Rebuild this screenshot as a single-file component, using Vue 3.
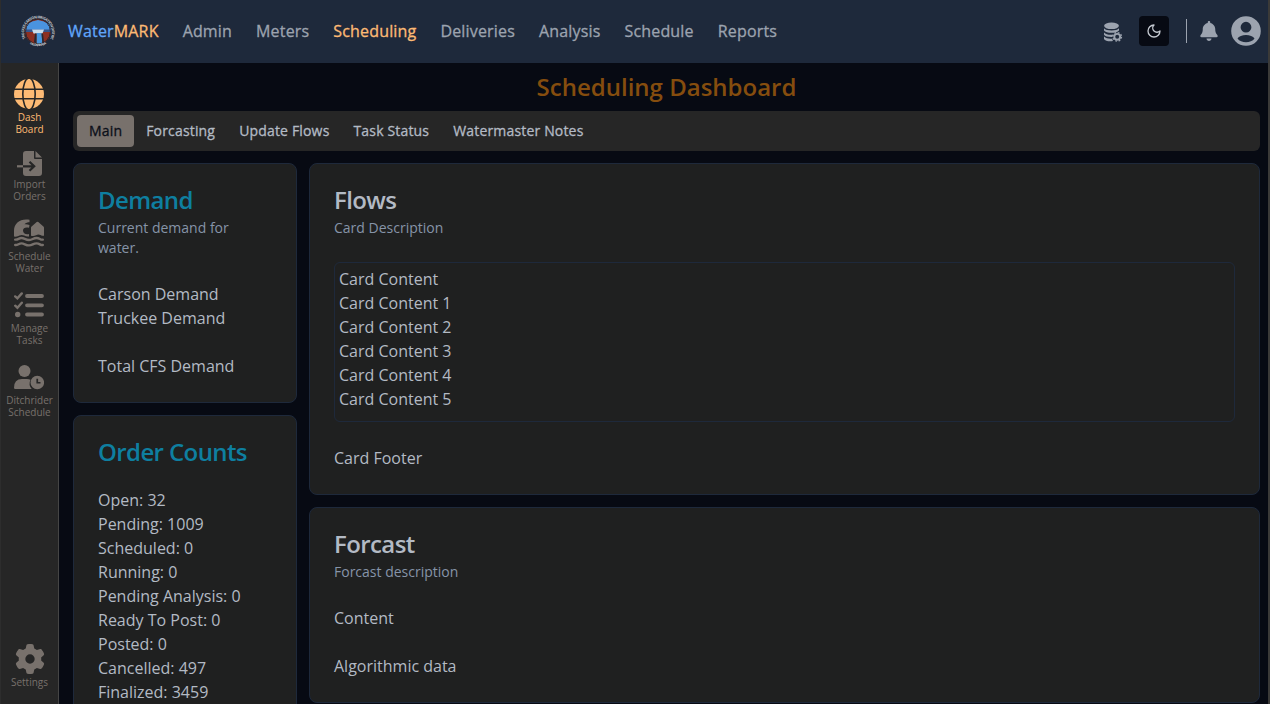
<script setup>
const nav = ['Admin', 'Meters', 'Scheduling', 'Deliveries', 'Analysis', 'Schedule', 'Reports']
const tabs = ['Main', 'Forcasting', 'Update Flows', 'Task Status', 'Watermaster Notes']
const orders = ['Open: 32', 'Pending: 1009', 'Scheduled: 0', 'Running: 0', 'Pending Analysis: 0', 'Ready To Post: 0', 'Posted: 0', 'Cancelled: 497', 'Finalized: 3459']
const rows = ['Card Content', 'Card Content 1', 'Card Content 2', 'Card Content 3', 'Card Content 4', 'Card Content 5']
</script>

<template>
  <div class="frame">
    <header class="top">
      <svg class="logo" width="36" height="36" viewBox="0 0 36 36">
        <defs>
          <path id="arcTop" d="M5.500 25.500 A14 14 0 1 1 30.500 25.500" />
          <path id="arcBottom" d="M9 30.500 A17 17 0 0 0 27 30.500" />
          <clipPath id="disc"><circle cx="18" cy="18.500" r="12.800" /></clipPath>
        </defs>
        <g clip-path="url(#disc)">
          <rect width="36" height="36" fill="#8d2f22" />
          <path d="M5 17 7 11 12 8.500 18 7 24 8.500 29 11 31 17z" fill="#4a93df" />
          <path d="M5 16.500h26v2.500H5z" fill="#35548a" />
          <path d="M12 16.500h12l-1.500 4h-9z" fill="#cbdceb" />
          <path d="M16.500 20h5l1 12h-6z" fill="#4697df" />
          <path d="M15 20.500h1.500v11L14 29zM21.500 20.500H23l1 8-1.500 3z" fill="#2a2830" />
          <circle cx="18" cy="18.500" r="12.500" fill="none" stroke="#26242a" stroke-width="1" />
        </g>
        <text class="seal"><textPath href="#arcTop" textLength="59">TRUCKEE-CARSON IRRIGATION DISTRICT</textPath></text>
        <text class="seal low"><textPath href="#arcBottom" startOffset="1" textLength="17">FALLON, NEVADA</textPath></text>
      </svg>
      <div class="brand">Water<span>MARK</span></div>
      <nav><a v-for="n in nav" :key="n" :class="{ on: n === 'Scheduling' }">{{ n }}</a></nav>
      <div class="tools">
        <svg class="db" width="20" height="20" viewBox="0 0 20 20">
          <ellipse cx="8.500" cy="3.800" rx="7.400" ry="3.300" />
          <path d="M1 6.200C3 9.200 14 9.200 16 6.200v2.300C14 11.600 3 11.600 1 8.500zM1 10.400c2 2.300 6 2.700 9.500 2.100L9.200 14.900C5 15 2 14.200 1 12.700zM1 14.600c2 2 5 2.300 8 2.100l1 2.400c-4 .6-8-.1-9-2.200z" />
          <circle cx="14.200" cy="14.800" r="2.900" fill="none" stroke="#9ca3af" stroke-width="1.900" />
          <circle cx="14.200" cy="14.800" r="4.300" fill="none" stroke="#9ca3af" stroke-width="1.300" stroke-dasharray="1.800 1.577" />
        </svg>
        <div class="mode">
          <svg width="16" height="16" viewBox="0 0 24 24"><path d="M12 3a6 6 0 0 0 9 9 9 9 0 1 1-9-9Z" fill="none" stroke="#c5cad2" stroke-width="2" stroke-linecap="round" stroke-linejoin="round" /></svg>
        </div>
        <i class="sep"></i>
        <svg class="bell" width="18" height="20" viewBox="0 0 448 512"><path d="M224 0c-17.700 0-32 14.300-32 32V51.200C119 66 64 130.600 64 208v18.800c0 47-17.300 92.400-48.500 127.600l-7.400 8.300c-8.400 9.400-10.400 22.900-5.300 34.400S19.400 416 32 416H416c12.600 0 24-7.400 29.200-18.900s3.100-25-5.300-34.400l-7.400-8.300C401.300 319.200 384 273.900 384 226.800V208c0-77.400-55-142-128-156.800V32c0-17.700-14.300-32-32-32zm45.300 493.300c12-12 18.700-28.300 18.700-45.300H160c0 17 6.700 33.300 18.700 45.300s28.300 18.700 45.300 18.700 33.300-6.700 45.300-18.700z" /></svg>
        <svg class="user" width="30" height="30" viewBox="0 0 30 30"><path fill-rule="evenodd" d="M15 .2a14.800 14.800 0 1 0 0 29.600 14.800 14.800 0 0 0 0-29.600zM15 5.800a5.400 5.400 0 1 1 0 10.800 5.400 5.400 0 0 1 0-10.800zM6.500 22.500C9 17.700 21 17.700 23.500 22.500 20 27.500 10 27.500 6.500 22.500z" /></svg>
      </div>
    </header>

    <div class="body">
      <aside>
        <div class="item on i1">
          <svg width="30" height="30" viewBox="0 0 30 30">
            <circle cx="15" cy="15" r="15" />
            <g class="cut"><ellipse cx="15" cy="15" rx="6.200" ry="16" /><path d="M0 10.200h30M0 19.800h30" /></g>
          </svg>
          <span>Dash<br>Board</span>
        </div>
        <div class="item i2">
          <svg width="26" height="26" viewBox="0 0 26 26">
            <path d="M9 0h8v7q0 1 1 1h7v14q0 3-3 3H9q-3 0-3-3V3q0-3 3-3zM18.500 0 25 6.500h-6.500z" />
            <path class="shaft" d="M0 15.300h6" /><path class="arrow" d="M6 15.300h11M12.500 10.800l4.700 4.500-4.700 4.500" />
          </svg>
          <span>Import<br>Orders</span>
        </div>
        <div class="item i3">
          <svg width="30" height="28" viewBox="0 0 30 28">
            <path d="M15.500.8C7-1 0 4 0 11.500v6q3.500.5 5.500-1 2.300-1.200 4.700 0 2 1.200 4.800.9V15C11.500 15.800 9 14 9 11.500 9 9 11.500 8 15 8.800L15.500 6c-2-.8-3.500-1-5-.7 1.500-1.700 3-2.100 5-2.100z" />
            <path d="M17 8.800q0-.8.600-1.300L22.700 3q.8-.6 1.600 0l5.100 4.500q.6.500.6 1.300v8q-1.500.3-3.500-.8-2.200-1-4.500.3-2.500 1.400-5 .4z" />
            <path class="wave" d="M1.200 20.600c2.800.4 3.500-1.600 6.300-1.600s4 2 7.500 2 4-2 7.500-2 3.500 2 6.300 1.600M1.200 26c2.800.4 3.500-1.600 6.300-1.600s4 2 7.500 2 4-2 7.500-2 3.500 2 6.300 1.600" />
          </svg>
          <span>Schedule<br>Water</span>
        </div>
        <div class="item i4">
          <svg width="30" height="26" viewBox="0 0 30 26">
            <path class="check" d="M1.200 4.400 3.400 6.400 7.800 1.400M1.200 13.700 3.400 15.700 7.800 10.700" />
            <circle cx="3.700" cy="22.500" r="2.700" />
            <path class="bar" d="M13 4h15M13 13.300h15M13 22.500h15" />
          </svg>
          <span>Manage<br>Tasks</span>
        </div>
        <div class="item i5">
          <svg width="30" height="25" viewBox="0 0 30 25">
            <circle cx="10.500" cy="6" r="6" />
            <path d="M8 14h5q2 0 3.500.8a8.500 8.500 0 0 0 1.200 9.200H1.200Q0 24 0 22.800 0 14 8 14z" />
            <path fill-rule="evenodd" d="M23.300 10.700a6.800 6.800 0 1 0 0 13.600 6.800 6.800 0 0 0 0-13.600zM22.400 13.700h1.700v3.200h2.400v1.700h-4.100z" />
          </svg>
          <span>Ditchrider<br>Schedule</span>
        </div>
        <div class="item settings">
          <svg width="30" height="30" viewBox="0 0 512 512"><path d="M495.900 166.600c3.200 8.700.5 18.400-6.400 24.600l-43.300 39.400c1.100 8.300 1.700 16.800 1.700 25.400s-.6 17.100-1.700 25.400l43.300 39.400c6.900 6.200 9.600 15.900 6.400 24.600-4.400 11.900-9.700 23.300-15.800 34.300l-4.700 8.100c-6.600 11-14 21.400-22.100 31.200-5.900 7.200-15.700 9.600-24.500 6.800l-55.700-17.700c-13.400 10.300-28.200 18.900-44 25.400l-12.500 57.100c-2 9.100-9 16.300-18.200 17.800-13.800 2.300-28 3.500-42.500 3.500s-28.700-1.200-42.500-3.500c-9.200-1.500-16.200-8.700-18.200-17.800l-12.500-57.100c-15.800-6.500-30.600-15.100-44-25.400L83.100 425.900c-8.800 2.800-18.600.3-24.500-6.800-8.100-9.800-15.500-20.200-22.100-31.200l-4.700-8.100c-6.100-11-11.400-22.400-15.800-34.300-3.200-8.700-.5-18.400 6.400-24.600l43.300-39.400C64.600 273.100 64 264.600 64 256s.6-17.100 1.700-25.400L22.400 191.200c-6.900-6.200-9.600-15.900-6.400-24.600 4.400-11.900 9.700-23.300 15.800-34.300l4.700-8.100c6.600-11 14-21.400 22.100-31.200 5.900-7.200 15.700-9.600 24.500-6.800l55.700 17.700c13.400-10.300 28.200-18.900 44-25.400l12.500-57.100c2-9.100 9-16.300 18.200-17.800C227.300 1.200 241.500 0 256 0s28.700 1.200 42.500 3.500c9.200 1.500 16.200 8.700 18.200 17.800l12.500 57.100c15.800 6.500 30.600 15.100 44 25.400l55.700-17.700c8.800-2.800 18.600-.3 24.500 6.800 8.100 9.800 15.500 20.200 22.100 31.200l4.700 8.100c6.100 11 11.400 22.400 15.800 34.300zM256 336a80 80 0 1 0 0-160 80 80 0 1 0 0 160z" /></svg>
          <span>Settings</span>
        </div>
      </aside>

      <main>
        <h1>Scheduling Dashboard</h1>
        <div class="tabs"><button v-for="t in tabs" :key="t" :class="{ on: t === 'Main' }">{{ t }}</button></div>
        <div class="grid">
          <div class="col">
            <section class="card teal">
              <h3>Demand</h3>
              <p class="desc">Current demand for water.</p>
              <div class="content">Carson Demand<br>Truckee Demand<br><br>Total CFS Demand</div>
            </section>
            <section class="card teal">
              <h3>Order Counts</h3>
              <div class="content"><div v-for="o in orders" :key="o">{{ o }}</div></div>
            </section>
          </div>
          <div class="col">
            <section class="card">
              <h3>Flows</h3>
              <p class="desc">Card Description</p>
              <div class="scroll"><div v-for="r in rows" :key="r">{{ r }}</div></div>
              <div class="content">Card Footer</div>
            </section>
            <section class="card">
              <h3>Forcast</h3>
              <p class="desc">Forcast description</p>
              <div class="content">Content</div>
              <div class="content">Algorithmic data</div>
            </section>
          </div>
        </div>
      </main>
    </div>
  </div>
</template>

<style>
body { background: #070a13; overflow: hidden; }
</style>

<style scoped>
* { box-sizing: border-box; }
.frame { width: 1270px; height: 704px; overflow: hidden; display: flex; flex-direction: column; border-left: 1px solid #2d2d2d; border-right: 2px solid #3b3a38; background: #070a13; color: #b3bac4; font: 16px/24px "Open Sans", sans-serif; }
.top { height: 63px; flex: none; background: #1e293b; display: flex; align-items: center; padding: 0 7px 1px 19px; }
.logo { flex: none; margin-right: 12px; overflow: visible; }
.seal { font: bold 3.600px "Open Sans", sans-serif; fill: #c3c6ca; }
.low { font-size: 3px; }
.brand, nav, .tabs { letter-spacing: 0.17px; -webkit-text-stroke: 0.3px currentColor; }
.brand { color: #60a5fa; }
.brand span { color: #fdba74; }
nav { display: flex; gap: 24px; margin-left: 24px; color: #9ca3af; }
nav .on { color: #fdba74; }
.tools { margin-left: auto; display: flex; align-items: center; fill: #9ca3af; }
.tools svg { display: block; }
.db { position: relative; top: 1px; }
.mode { width: 30px; height: 30px; border-radius: 4px; background: #070a13; display: grid; place-items: center; margin-left: 16px; }
.sep { width: 1px; height: 24px; background: #9ca3af; margin: 0 13px 0 17px; }
.user { margin-left: 13px; }
.body { flex: 1; min-height: 0; display: flex; }
aside { width: 58px; flex: none; background: #262626; border-right: 1px solid #454545; display: flex; flex-direction: column; align-items: center; padding: 0 1px 16px 0; }
.item { display: flex; flex-direction: column; align-items: center; text-align: center; font-size: 10px; line-height: 12px; color: #78716c; fill: #78716c; }
.item svg { display: block; margin-bottom: 2px; }
.item span { padding-left: 1px; }
.item.on { color: #fdba74; fill: #fdba74; }
.i1 { margin-top: 16px; }
.i2 { margin-top: 16px; }
.i2 svg { margin: 0 0 1px 2px; }
.i3 { margin-top: 17px; }
.i3 svg { margin-bottom: 3px; }
.i4 { margin-top: 18px; }
.i4 svg { margin-bottom: 4px; }
.i5 { margin-top: 19px; }
.i5 svg { margin-bottom: 4px; }
.settings { margin-top: auto; }
.settings svg { margin-left: 2px; }
.cut { fill: none; stroke: #262626; stroke-width: 1.600; }
.shaft { stroke: #78716c; stroke-width: 2.200; }
.arrow { fill: none; stroke: #262626; stroke-width: 2.200; }
.wave { fill: none; stroke: #78716c; stroke-width: 2.400; stroke-linecap: round; }
.check { fill: none; stroke: #78716c; stroke-width: 2.400; stroke-linecap: round; }
.bar { stroke: #78716c; stroke-width: 3.800; stroke-linecap: round; }
main { flex: 1; min-width: 0; padding: 8px 8px 0 14px; }
h1 { margin: 0 0 8px; font-size: 24px; line-height: 32px; font-weight: 600; text-align: center; color: #854d0e; }
.tabs { height: 40px; padding: 4px; border-radius: 6px; background: #262626; display: flex; }
.tabs button { border: 0; background: none; padding: 0 12px; border-radius: 4px; font: 14px/20px "Open Sans", sans-serif; letter-spacing: inherit; color: #b3bac4; }
.tabs .on { background: #78716c; color: #0b0f19; }
.grid { margin-top: 12px; display: grid; grid-template-columns: 224px 1fr; gap: 12px; }
.col { display: flex; flex-direction: column; gap: 12px; }
.card { border: 1px solid #1e293b; border-radius: 8px; background: #1f2020; padding: 24px; }
h3 { margin: 0; font-size: 24px; line-height: 24px; font-weight: 600; letter-spacing: -0.6px; }
.teal h3 { color: #0e7fa0; }
.desc { margin: 6px 0 0; font-size: 14px; line-height: 20px; color: #8694a8; }
.content { margin-top: 24px; }
.scroll { margin-top: 24px; height: 160px; overflow: hidden; border: 1px solid #1e293b; border-radius: 6px; padding: 4px; }
</style>
